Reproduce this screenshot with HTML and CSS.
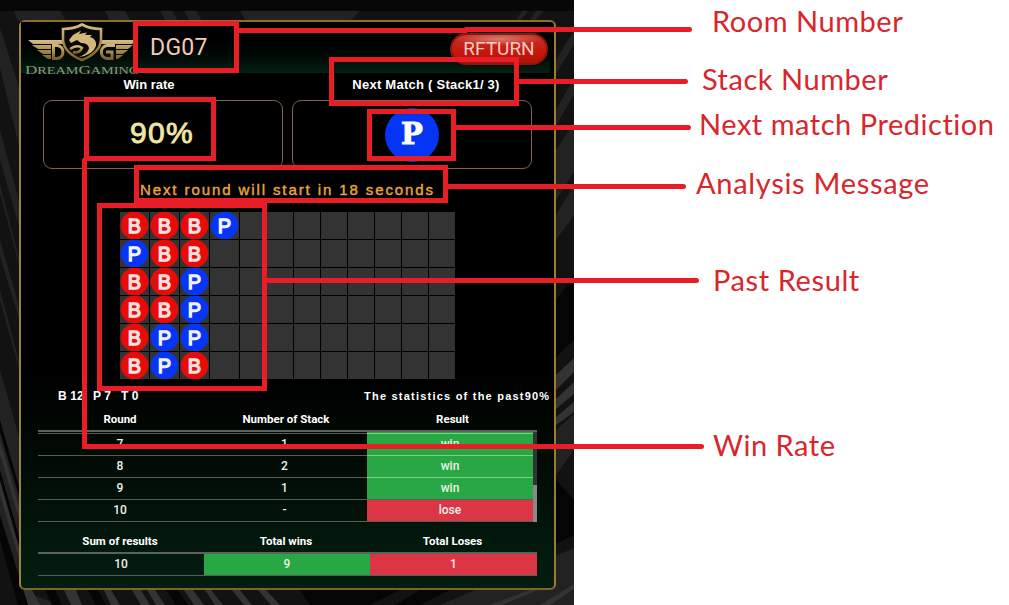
FILE: index.html
```html
<!DOCTYPE html>
<html lang="en">
<head>
<meta charset="utf-8">
<title>DG07 guide</title>
<link rel="stylesheet" href="styles.css">
</head>
<body>
<main class="stage">
  <svg class="backdrop" width="574" height="605" viewBox="0 0 574 605" aria-hidden="true">
    <rect width="574" height="605" fill="#121212"/>
    <g fill="#222">
      <path d="M0 28L0 68L20 150V90Z M0 130L20 205V230L0 160Z M0 185L20 262V268L0 193Z M0 240L20 310V322L0 256Z M0 290L20 365V372L0 300Z M0 370L20 440V590L60 605H20L0 520Z"/>
      <path d="M14 11H60L66 21H18Z M105 11H125L131 21H110Z M160 11H172L178 21H166Z M184 11H196L202 21H190Z M240 11H360L350 21H246Z"/>
      <path d="M556 110L574 78V94L556 126Z M556 150L574 122V172L556 200Z M516 20L522 11H528L521 20Z M530 20L536 11H543L536 20Z M556 60L574 30V44L556 74Z M556 215L574 185V215L556 240Z M556 430L574 414V450L556 475Z M440 605L574 548V605Z"/>
    </g>
    <g fill="#333">
      <path d="M556 375L574 358V372L556 390Z M556 399L574 382V394L556 409Z M556 417L574 402V412L556 425Z"/>
      <path d="M20 590H32L40 605H28Z M64 590H76L82 605H71Z M104 590H111L120 605H111Z M132 590H141L150 605H141Z M147 590H155L165 605H156Z M184 590H193L204 605H194Z M205 590H211L223 605H215Z M232 590H240L252 605H244Z M258 590H266L280 605H271Z"/>
      <path d="M0 440L20 510V522L0 454Z M0 480L20 550V562L0 495Z M540 605L574 584V589L550 605Z M490 605L530 590H538L502 605Z"/>
    </g>
    <path fill="#050505" d="M0 470L20 540V550L0 480Z M0 515L28 605H18L0 540Z M0 420L20 490V500L0 432Z M556 300L574 275V340L556 357Z M556 480L574 500V535L556 544Z M45 590H55L62 605H52Z M88 590H98L106 605H96Z M166 590H178L188 605H176Z M300 590H400L370 605H310Z M420 590H450L420 605H395Z"/>
    <rect width="574" height="11" fill="#070707"/>
  </svg>
  <section class="panel">
    <header class="head">
      <svg class="logo" width="118" height="54" viewBox="0 0 118 54" role="img" aria-label="DreamGaming">
        <defs><linearGradient id="gold" x2="0" y2="1"><stop stop-color="#d5be86"/><stop offset=".55" stop-color="#aa8a49"/><stop offset="1" stop-color="#7c602a"/></linearGradient></defs>
        <g fill="url(#gold)">
          <path d="M7 18H42V22H12Z M11 23H30V27H17Z M16 28H30V32H22Z M21 33H30V37H27Z"/>
          <path d="M116 18H80V22H111Z M95 23H112L107 27H95Z M95 28H107L102 32H95Z M95 33H102L97 37H95Z"/>
        </g>
        <g fill="none" stroke="url(#gold)">
          <path stroke-width="3" d="M32.500 22V36.500H36C44 36 44 24 36 23.500H32M94 23.500H86C78 25 79 36 86 36.500H91V30H85"/>
          <path fill="#070806" stroke-width="2.6" d="M61 2.500Q69 7 80 7V18Q79 31 61 38Q43 31 42 18V7Q53 7 61 2.500Z"/>
        </g>
        <path fill="#d3b77b" d="M48 18L52 13L60 8.500L58 12L66 10.500L64 13L71 13L69 15Q76 17 75 24Q72 33 58 35Q68 31 68 26Q67 21 60 21L56 18L50 21Z"/>
        <path fill="none" stroke="url(#gold)" stroke-width="2.600" d="M49 27Q56 22 61 26Q58 32 52 30"/>
        <text class="wordmark" x="4" y="51.500" textLength="114" lengthAdjust="spacingAndGlyphs">D<tspan class="caps">REAM</tspan>G<tspan class="caps">AMING</tspan></text>
      </svg>
      <span class="room">DG07</span>
      <span class="return">RFTURN</span>
    </header>
    <div class="tiles">
      <div class="tile"><h2>Win rate</h2><div class="box rate">90%</div></div>
      <div class="tile"><h2 class="shift">Next Match ( Stack1/ 3)</h2><div class="box"><span class="pick">P</span></div></div>
    </div>
    <p class="message">Next round will start in 18 seconds</p>
    <div class="road">
      <i class="b">B</i><i class="b">B</i><i class="b">B</i><i class="p">P</i><i></i><i></i><i></i><i></i><i></i><i></i><i></i><i></i>
      <i class="p">P</i><i class="b">B</i><i class="b">B</i><i></i><i></i><i></i><i></i><i></i><i></i><i></i><i></i><i></i>
      <i class="b">B</i><i class="b">B</i><i class="p">P</i><i></i><i></i><i></i><i></i><i></i><i></i><i></i><i></i><i></i>
      <i class="b">B</i><i class="b">B</i><i class="p">P</i><i></i><i></i><i></i><i></i><i></i><i></i><i></i><i></i><i></i>
      <i class="b">B</i><i class="p">P</i><i class="p">P</i><i></i><i></i><i></i><i></i><i></i><i></i><i></i><i></i><i></i>
      <i class="b">B</i><i class="p">P</i><i class="b">B</i><i></i><i></i><i></i><i></i><i></i><i></i><i></i><i></i><i></i>
    </div>
    <div class="stats"><span class="count">B 12</span><span class="count">P 7</span><span class="count">T 0</span><span class="past">The statistics of the past90%</span></div>
    <div class="table">
      <div class="row th"><span>Round</span><span>Number of Stack</span><span>Result</span></div>
      <div class="scroll">
        <div class="rows">
          <div class="row"><span>7</span><span>1</span><span class="win">win</span></div>
          <div class="row"><span>8</span><span>2</span><span class="win">win</span></div>
          <div class="row"><span>9</span><span>1</span><span class="win">win</span></div>
          <div class="row"><span>10</span><span>-</span><span class="lose">lose</span></div>
        </div>
        <div class="bar"><div class="thumb"></div></div>
      </div>
    </div>
    <div class="table sum">
      <div class="row th"><span>Sum of results</span><span>Total wins</span><span>Total Loses</span></div>
      <div class="row"><span>10</span><span class="win">9</span><span class="lose">1</span></div>
    </div>
  </section>
</main>
<aside class="labels">
  <p class="room-label">Room Number</p>
  <p class="stack-label">Stack Number</p>
  <p class="next-label">Next match Prediction</p>
  <p class="message-label">Analysis Message</p>
  <p class="past-label">Past Result</p>
  <p class="rate-label">Win Rate</p>
</aside>
<svg class="callouts" width="1009" height="605" viewBox="0 0 1009 605" aria-hidden="true">
  <rect x="135.5" y="23.5" width="101" height="47"/>
  <rect x="331.5" y="59.5" width="185" height="44"/>
  <rect x="86.5" y="99.5" width="127" height="59"/>
  <rect x="369.5" y="111.5" width="84" height="47"/>
  <rect x="136.5" y="167.5" width="309" height="33"/>
  <rect x="99.5" y="205.5" width="165" height="183"/>
  <path d="M238 30.5H466M466 29.5H689.5M518 81.5H685.5M455 127.5H688.5M447 186.5H683.5M266 280.5H696.5M84.500 160V446.500H701.500"/>
</svg>
</body>
</html>
```
FILE: styles.css
```css
* { box-sizing: border-box; }
body { margin: 0; width: 1009px; height: 605px; display: flex; position: relative; overflow: hidden; background: #fff; font-family: "Liberation Sans", Arial, sans-serif; }
h2, p { margin: 0; }
.stage { position: relative; flex: none; width: 574px; height: 605px; padding: 20px 0 0 19px; }
.backdrop { position: absolute; inset: 0; }
.panel { position: relative; width: 537px; height: 570px; border: 2px solid; border-color: #8c6c30 #9b7c37 #7e6429 #9b8043; border-radius: 6px; background: linear-gradient(#000 0, #000 350px, #010b05 440px, #031e10 566px); }
.head { display: flex; align-items: flex-start; height: 51px; width: 529px; background: linear-gradient(#000 40%, #010b06 70%, #052113); }
.logo { flex: none; }
.wordmark { font: 12px "Liberation Serif", serif; fill: #8c9874; }
.caps { font-size: 10px; }
.room { margin: 13px 0 0 11px; width: 290px; font: 23px/26px Roboto, sans-serif; color: #f2cbb7; letter-spacing: .3px; }
.return { width: 98px; height: 32px; margin: 11px 0 0 10px; flex: none; border-radius: 16px; border: 2px solid #8d150d; background: radial-gradient(ellipse 44px 7px at 50% 4px, #d87c70, transparent), linear-gradient(#bd3028, #c91c10 50%, #b01108); color: #f5c9c2; font: 19px/28px Roboto, sans-serif; text-align: center; }
.tiles { display: flex; gap: 9px; padding-left: 22px; }
.tile { width: 240px; }
.tile h2 { height: 27px; padding-right: 28px; font-size: 13px; line-height: 23px; text-align: center; color: #fff; white-space: nowrap; }
.tile .shift { padding: 0 0 0 28px; letter-spacing: .25px; }
.box { display: flex; align-items: center; justify-content: center; height: 69px; border: 1px solid #806050; border-radius: 9px; }
.rate { color: #eee7a0; font-size: 30px; letter-spacing: 1.3px; -webkit-text-stroke: .9px #eee7a0; padding: 0 2px 3px 0; }
.pick { width: 54px; height: 54px; border-radius: 50%; background: #0435f5; color: #fff; font: bold 29px/52px "DejaVu Serif", serif; -webkit-text-stroke: 1px #fff; text-align: center; }
.message { margin-top: 10px; height: 22px; padding-left: 119px; color: #eda43d; font-size: 15px; line-height: 21px; letter-spacing: 1.9px; -webkit-text-stroke: .4px #eda43d; white-space: nowrap; }
.road { display: grid; grid-template-columns: repeat(4, 29px) repeat(8, 26px); grid-auto-rows: 27px; gap: 1px; margin: 11px 0 0 99px; }
.road i { background: #333; font: normal 20px/29px "Liberation Sans", sans-serif; -webkit-text-stroke: 1.3px #ffe0e0; color: #ffe0e0; text-align: center; }
.road .b { background: radial-gradient(circle, #e90a0a 13.3px, #333 14.3px); }
.road .p { background: radial-gradient(circle, #0735f5 13.3px, #333 14.3px); color: #f0f2ff; -webkit-text-stroke-color: #f0f2ff; }
.stats { display: flex; height: 25px; margin-top: 7px; padding-left: 37px; color: #fff; font-weight: bold; font-size: 12px; line-height: 21px; white-space: nowrap; }
.count { width: 28px; letter-spacing: .1px; }
.count:first-child { width: 35px; }
.past { margin-left: 215px; font-size: 11px; letter-spacing: 1.22px; }
.table { width: 499px; margin-left: 17px; color: #edf2e9; font: 500 12px/21px Roboto, sans-serif; }
.row { display: grid; grid-template-columns: 166px 166px 167px; height: 22px; border-bottom: 1px solid #536059; text-align: center; }
.rows .row { grid-template-columns: 164px 165px 166px; border-bottom: 0; border-top: 1px solid #536059; }
.th { height: 21px; line-height: 16px; font-weight: 700; font-size: 11.5px; color: #fff; border-bottom: 2px solid #59625e; }
.th span { padding-right: 2px; }
.scroll { display: flex; height: 90px; }
.rows { width: 495px; border-bottom: 1px solid #536059; padding-top: 1px; background: linear-gradient(90deg, transparent 329px, #28a745 329px) 0 0 / 100% 2px no-repeat; }
.win { background: #28a745; }
.lose { background: #dc3545; }
.rows .win { border-top: 1px solid #83ca84; margin-top: -1px; }
.bar { width: 4px; background: #333; padding-top: 53px; }
.thumb { height: 37px; background: #888; }
.sum { margin-top: 11px; }
.labels { flex: 1; padding-top: 4px; color: #d9252c; font: 29px/34px Lato, sans-serif; letter-spacing: .53px; font-variant-ligatures: none; white-space: nowrap; }
.room-label { padding-left: 138px; }
.stack-label { margin-top: 24px; padding-left: 128px; }
.next-label { margin-top: 11px; padding-left: 125px; }
.message-label { margin-top: 25px; padding-left: 122px; letter-spacing: .7px; }
.past-label { margin-top: 63px; padding-left: 139px; letter-spacing: .6px; }
.rate-label { margin-top: 131px; padding-left: 139px; }
.callouts { position: absolute; inset: 0; fill: none; stroke: #e81d26; stroke-width: 5; stroke-linecap: round; pointer-events: none; }
```
